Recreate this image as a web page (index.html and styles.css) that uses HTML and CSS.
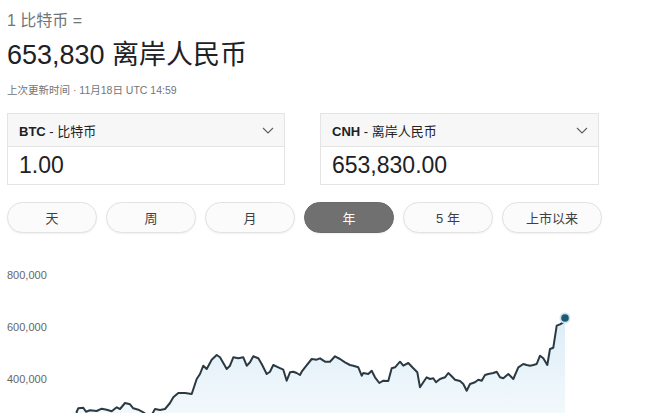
FILE: index.html
```html
<!DOCTYPE html>
<html lang="zh-CN">
<head>
<meta charset="utf-8">
<title>比特币 兑 离岸人民币</title>
<link rel="stylesheet" href="styles.css">
</head>
<body>
<div class="page">
  <div class="rate-from">1 比特币 =</div>
  <div class="rate-to">653,830 离岸人民币</div>
  <div class="updated">上次更新时间 · 11月18日 UTC 14:59</div>

  <div class="converters">
    <div class="conv conv-left">
      <div class="conv-head">
        <span class="cur"><b>BTC</b> - 比特币</span>
        <svg class="chev" width="12" height="7" viewBox="0 0 12 7"><path d="M1 1 L6 6 L11 1" fill="none" stroke="#5f6368" stroke-width="1.2"/></svg>
      </div>
      <div class="conv-val">1.00</div>
    </div>
    <div class="conv conv-right">
      <div class="conv-head">
        <span class="cur"><b>CNH</b> - 离岸人民币</span>
        <svg class="chev" width="12" height="7" viewBox="0 0 12 7"><path d="M1 1 L6 6 L11 1" fill="none" stroke="#5f6368" stroke-width="1.2"/></svg>
      </div>
      <div class="conv-val">653,830.00</div>
    </div>
  </div>

  <div class="ranges">
    <div class="range">天</div>
    <div class="range">周</div>
    <div class="range">月</div>
    <div class="range active">年</div>
    <div class="range">5 年</div>
    <div class="range wide">上市以来</div>
  </div>

  <div class="chart">
    <div class="labels">
      <div class="lab">800,000</div>
      <div class="lab">600,000</div>
      <div class="lab">400,000</div>
    </div>
    <svg class="plot" width="660" height="164" viewBox="0 250 660 164">
      <defs>
        <linearGradient id="fillg" x1="0" y1="0" x2="0" y2="1">
          <stop offset="0" stop-color="#dcedf7"/>
          <stop offset="1" stop-color="#f3f9fc"/>
        </linearGradient>
      </defs>
      <polygon fill="url(#fillg)" points="76.7,414 76.7,412.7 78.3,409.3 83.3,408.7 86,412.7 90,411.3 96.7,412 101.7,409.7 106.7,410.7 111.7,412.3 116.7,408.3 120,410 125,404 130,405.3 133.3,409.3 138.3,410.7 143.3,413.3 147,416 151.7,416 155,410 160,411 165,410 170,404 173.3,398.3 178.3,394 185,394 191.7,395 196.7,380 200,375 203.3,366.7 206.7,370 211.7,360.7 216.7,356 220,358.3 223.3,364 226.7,370 230,366.7 233.3,358.3 238.3,359.3 243.3,358.3 246.7,366.7 250,363.3 253.3,357.3 258.3,359.3 261.7,365 266.7,375 270,372.7 273.3,366 278.3,368.3 283.3,370.7 286.7,381.7 290,373.3 293.3,372.7 296.7,374 300,376 301.7,372.7 305,368.3 311.7,360 316.7,360.7 320,359.3 325,362.7 330,362.7 335,357.3 340,360 345,363.3 350,366 353.3,366.7 358.3,368.3 361.7,376.7 363.3,374 368.3,375 371.7,371.7 375,378.3 379.3,384 383.3,381.7 388.3,382 391.7,369.3 395,368.3 400,362.7 403.3,366.7 408.3,364 413.3,369.3 417.3,373.3 420,388.3 423.3,383.3 426.7,378.3 430,380 433.3,379.3 436,383.3 440,380 445,378.3 448.3,374 451.7,377.3 455,380.7 460,382 463.3,385 466.7,391.7 470,385 475,383.3 478.3,380.7 481.7,381.7 485,376 488.3,375 493.3,374 496.7,372.7 500,378.3 503.3,379.3 508.3,375 513.3,380 518.3,368.3 523.3,365 526.7,366 530,366.7 533.3,366 536.7,365 540,356.7 543.3,359.3 547.3,366 550,350 553.3,348.7 556.7,326.7 560,325.3 563.3,323.3 565,319 565,414"/>
      <path fill="none" stroke="#2b3a42" stroke-width="2" stroke-linejoin="round" d="M76.7,416 76.7,412.7 78.3,409.3 83.3,408.7 86,412.7 90,411.3 96.7,412 101.7,409.7 106.7,410.7 111.7,412.3 116.7,408.3 120,410 125,404 130,405.3 133.3,409.3 138.3,410.7 143.3,413.3 147,416 M151.7,416 155,410 160,411 165,410 170,404 173.3,398.3 178.3,394 185,394 191.7,395 196.7,380 200,375 203.3,366.7 206.7,370 211.7,360.7 216.7,356 220,358.3 223.3,364 226.7,370 230,366.7 233.3,358.3 238.3,359.3 243.3,358.3 246.7,366.7 250,363.3 253.3,357.3 258.3,359.3 261.7,365 266.7,375 270,372.7 273.3,366 278.3,368.3 283.3,370.7 286.7,381.7 290,373.3 293.3,372.7 296.7,374 300,376 301.7,372.7 305,368.3 311.7,360 316.7,360.7 320,359.3 325,362.7 330,362.7 335,357.3 340,360 345,363.3 350,366 353.3,366.7 358.3,368.3 361.7,376.7 363.3,374 368.3,375 371.7,371.7 375,378.3 379.3,384 383.3,381.7 388.3,382 391.7,369.3 395,368.3 400,362.7 403.3,366.7 408.3,364 413.3,369.3 417.3,373.3 420,388.3 423.3,383.3 426.7,378.3 430,380 433.3,379.3 436,383.3 440,380 445,378.3 448.3,374 451.7,377.3 455,380.7 460,382 463.3,385 466.7,391.7 470,385 475,383.3 478.3,380.7 481.7,381.7 485,376 488.3,375 493.3,374 496.7,372.7 500,378.3 503.3,379.3 508.3,375 513.3,380 518.3,368.3 523.3,365 526.7,366 530,366.7 533.3,366 536.7,365 540,356.7 543.3,359.3 547.3,366 550,350 553.3,348.7 556.7,326.7 560,325.3 563.3,323.3 565,319"/>
      <circle cx="565" cy="319" r="5.5" fill="#cfe3ec"/>
      <circle cx="565" cy="319" r="3.8" fill="#1f5a72"/>
    </svg>
  </div>
</div>
</body>
</html>
```

FILE: styles.css
```css
html, body {
  margin: 0;
  padding: 0;
  background: #ffffff;
}
body {
  width: 660px;
  height: 414px;
  overflow: hidden;
  font-family: "Liberation Sans", "Noto Sans CJK SC", Arial, sans-serif;
  color: #202124;
}
.page {
  padding: 11px 0 0 7px;
}
.rate-from {
  font-size: 16px;
  line-height: 20px;
  color: #70757a;
}
.rate-to {
  margin-top: 7px;
  font-size: 27px;
  line-height: 34px;
  color: #202124;
}
.updated {
  margin-top: 11px;
  font-size: 10.5px;
  line-height: 14px;
  color: #70757a;
}
.converters {
  margin-top: 16px;
  display: flex;
  gap: 35px;
}
.conv {
  border: 1px solid #e4e4e4;
  box-sizing: border-box;
  height: 72px;
  display: flex;
  flex-direction: column;
}
.conv-left { width: 278px; }
.conv-right { width: 279px; }
.conv-head {
  height: 32px;
  background: #f7f7f7;
  border-bottom: 1px solid #e4e4e4;
  display: flex;
  align-items: center;
  justify-content: space-between;
  padding: 0 10px 0 11px;
  font-size: 13px;
  color: #202124;
}
.conv-head b {
  font-weight: bold;
}
.chev {
  display: block;
}
.conv-val {
  flex: 1;
  display: flex;
  align-items: center;
  padding-left: 11px;
  font-size: 23px;
  color: #202124;
}
.ranges {
  margin-top: 17px;
  display: flex;
  gap: 9px;
}
.range {
  width: 90px;
  height: 31px;
  box-sizing: border-box;
  border: 1px solid #e2e2e2;
  border-radius: 16px;
  background: #fbfbfb;
  box-shadow: 0 1px 2px rgba(0,0,0,0.06);
  display: flex;
  align-items: center;
  justify-content: center;
  font-size: 13px;
  color: #3c4043;
}
.range.wide {
  width: 100px;
}
.range.active {
  background: #707070;
  border-color: #6a6a6a;
  color: #ffffff;
}
.chart {
  position: relative;
  margin-left: -7px;
  margin-top: 16px;
  height: 164px;
}
.labels {
  padding: 19px 0 0 7px;
  display: flex;
  flex-direction: column;
  gap: 38px;
}
.lab {
  font-size: 11px;
  line-height: 14px;
  color: #666666;
}
.plot {
  position: absolute;
  left: 0;
  top: 0;
}
```
